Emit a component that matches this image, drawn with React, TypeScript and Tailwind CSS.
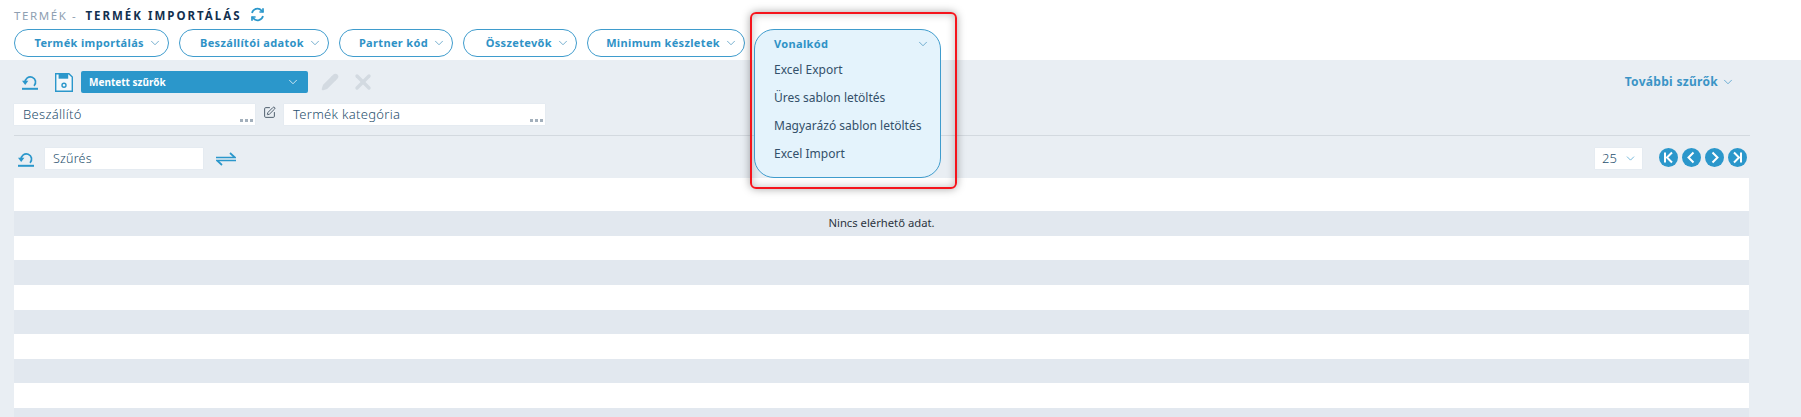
import { ChevronDown, Pencil, X, SquarePen } from 'lucide-react'

const tabs = [
  { label: 'Termék importálás', w: 'w-[155px]' },
  { label: 'Beszállítói adatok', w: 'w-[150px]' },
  { label: 'Partner kód', w: 'w-[114px]' },
  { label: 'Összetevők', w: 'w-[114px]' },
  { label: 'Minimum készletek', w: 'w-[158px]' },
]

const menuItems = ['Excel Export', 'Üres sablon letöltés', 'Magyarázó sablon letöltés', 'Excel Import']

function UndoIcon() {
  return (
    <svg width="16" height="16" viewBox="0 0 16 16" fill="none" stroke="#2b97cb">
      <path d="M3.2 8.5A5.2 5.2 0 1 1 12 11.8" strokeWidth="1.7" />
      <path d="M0 6.8h6.4L3.2 11z" fill="#2b97cb" stroke="none" />
      <path d="M0 14.8h16" strokeWidth="2" />
    </svg>
  )
}

function SaveIcon() {
  return (
    <svg width="18" height="19" viewBox="0 0 18 19" fill="none" stroke="#2b97cb" strokeWidth="1.4">
      <path d="M.7.7h13.2l3.4 3.4v14.2H.7z" fill="#f4f8fb" />
      <path d="M3.6.7h9.6v5H3.6z" fill="#2b97cb" stroke="none" />
      <circle cx="9" cy="12.2" r="2" />
    </svg>
  )
}

function SwapIcon() {
  return (
    <svg width="20" height="14" viewBox="0 0 20 14" fill="none" stroke="#2b97cb" strokeWidth="1.7">
      <path d="M0 5.5h19L14 1" />
      <path d="M20 8.5H1L6 13" />
    </svg>
  )
}

function RefreshIcon() {
  return (
    <svg width="15" height="15" viewBox="0 0 15 15" fill="none" stroke="#2b97cb" strokeWidth="1.7">
      <path d="M2 6a5.6 5.6 0 0 1 9.6-2.4L13 5" />
      <path d="M13 1.2V5H9.4" />
      <path d="M13 9a5.6 5.6 0 0 1-9.6 2.4L2 10" />
      <path d="M2 13.8V10h3.6" />
    </svg>
  )
}

function PageButton({ d }: { d: string }) {
  return (
    <svg width="19" height="19" viewBox="0 0 19 19" fill="none" stroke="white" strokeWidth="2">
      <circle cx="9.5" cy="9.5" r="9.5" fill="#2b97cb" stroke="none" />
      <path d={d} />
    </svg>
  )
}

function LookupInput({ label, w }: { label: string; w: string }) {
  return (
    <div className={`relative h-[21px] ${w} bg-white pl-[9px] text-[13px] leading-[21px] font-light tracking-[0.3px] text-[#28506e] shadow-[0_0_1px_#d5dde4]`}>
      {label}
      <span className="absolute right-[2px] bottom-[3px] flex gap-[2px]">
        <i className="size-[3px] bg-[#a3b0bc]" />
        <i className="size-[3px] bg-[#a3b0bc]" />
        <i className="size-[3px] bg-[#a3b0bc]" />
      </span>
    </div>
  )
}

export default function App() {
  return (
    <div className="relative h-[417px] w-[1801px] overflow-hidden bg-[#e9eef3] font-['Noto_Sans',sans-serif]">
      {/* Header */}
      <div className="h-[60px] bg-white pl-[14px]">
        <div className="flex h-[29px] items-center pt-[2px] text-[11.5px] tracking-[1.6px]">
          <span className="text-[#8f9fb2]">TERMÉK -</span>
          <span className="ml-[8px] font-bold tracking-[2px] text-[#12304f]">TERMÉK IMPORTÁLÁS</span>
          <span className="ml-[8px] -mt-[3px]">
            <RefreshIcon />
          </span>
        </div>
        <div className="flex gap-[10px]">
          {tabs.map((t) => (
            <div
              key={t.label}
              className={`flex h-[28px] ${t.w} items-center justify-end rounded-full border border-[#3f9ccd] pr-[6px] text-[11px] font-bold tracking-[0.35px] text-[#2f92c6]`}
            >
              {t.label}
              <ChevronDown size={14} strokeWidth={1.2} className="ml-[4px] text-[#3f8fbb]" />
            </div>
          ))}
        </div>
      </div>

      {/* Filters */}
      <div className="pl-[14px]">
        <div className="flex h-[44px] items-center pr-[66px]">
          <span className="ml-[8px]">
            <UndoIcon />
          </span>
          <span className="ml-[17px]">
            <SaveIcon />
          </span>
          <div className="ml-[8px] flex h-[22px] w-[227px] items-center justify-between rounded-[2px] bg-[#2b97cb] pl-[8px] pr-[8px] text-[10px] font-bold text-white">
            Mentett szűrők
            <ChevronDown size={14} strokeWidth={1.3} />
          </div>
          <Pencil size={18} fill="#d3dae1" stroke="#d3dae1" className="ml-[13px]" />
          <X size={24} strokeWidth={3.4} className="ml-[12px] text-[#d3dae1]" />
          <div className="ml-auto flex items-center text-[12px] font-bold tracking-[0.3px] text-[#3a94c6]">
            További szűrők
            <ChevronDown size={14} strokeWidth={1.2} className="ml-[3px]" />
          </div>
        </div>
        <div className="flex items-start">
          <LookupInput label="Beszállító" w="w-[241px]" />
          <SquarePen size={13} strokeWidth={1.8} className="ml-[8px] mt-[2px] text-[#4c5c6a]" />
          <span className="w-[8px]" />
          <LookupInput label="Termék kategória" w="w-[261px]" />
        </div>
        <div className="mt-[10px] h-[1px] w-[1736px] bg-[#d3d9df]" />
        <div className="mt-[12px] flex h-[21px] w-[1735px] items-center">
          <span className="ml-[4px]">
            <UndoIcon />
          </span>
          <div className="ml-[11px] h-[21px] w-[158px] bg-white pl-[8px] text-[12.5px] leading-[21px] font-light tracking-[0.2px] text-[#28506e] shadow-[0_0_1px_#d5dde4]">
            Szűrés
          </div>
          <span className="ml-[13px]">
            <SwapIcon />
          </span>
          <div className="ml-auto flex h-[21px] w-[47px] items-center justify-between bg-white pl-[7px] pr-[5px] text-[13px] font-light text-[#28506e] shadow-[0_0_1px_#d5dde4]">
            25
            <ChevronDown size={13} strokeWidth={1.3} className="text-[#3f9ccd]" />
          </div>
          <div className="ml-[17px] -mt-[2px] flex gap-[4px]">
            <PageButton d="M6 4.5v10M13 4.5 8 9.5l5 5" />
            <PageButton d="M11.5 4.5 6.5 9.5l5 5" />
            <PageButton d="M7.5 4.5l5 5-5 5" />
            <PageButton d="M13 4.5v10M6 4.5l5 5-5 5" />
          </div>
          <span className="w-[2px] shrink-0" />
        </div>
      </div>

      {/* Grid */}
      <div className="ml-[14px] mt-[9px] w-[1735px] text-[11.25px] text-[#2c3440]">
        <div className="h-[33px] bg-white" />
        <div className="flex h-[25px] items-center justify-center bg-[#e2e8ef]">Nincs elérhető adat.</div>
        <div className="h-[24px] bg-white" />
        <div className="h-[25px] bg-[#e2e8ef]" />
        <div className="h-[25px] bg-white" />
        <div className="h-[24px] bg-[#e2e8ef]" />
        <div className="h-[25px] bg-white" />
        <div className="h-[24px] bg-[#e2e8ef]" />
        <div className="h-[25px] bg-white" />
        <div className="h-[25px] bg-[#e2e8ef]" />
      </div>

      {/* Open dropdown with highlight */}
      <div className="absolute left-[750px] top-[12px] h-[177px] w-[207px] rounded-[6px] border-2 border-[#f5141c] shadow-[0_0_8px_rgba(0,0,0,0.35),inset_0_0_8px_rgba(0,0,0,0.25)]" />
      <div className="absolute left-[754px] top-[29px] h-[149px] w-[187px] rounded-[20px] border border-[#3f9ccd] bg-[#e4f3fc] pl-[19px]">
        <div className="flex h-[28px] items-center justify-between pr-[10px] text-[11px] font-bold tracking-[0.35px] text-[#2f92c6]">
          Vonalkód
          <ChevronDown size={14} strokeWidth={1.2} className="text-[#3f8fbb]" />
        </div>
        <div className="-mt-[2px] text-[12px] text-[#33506a]">
          {menuItems.map((m) => (
            <div key={m} className="flex h-[28px] items-center">
              {m}
            </div>
          ))}
        </div>
      </div>
    </div>
  )
}
